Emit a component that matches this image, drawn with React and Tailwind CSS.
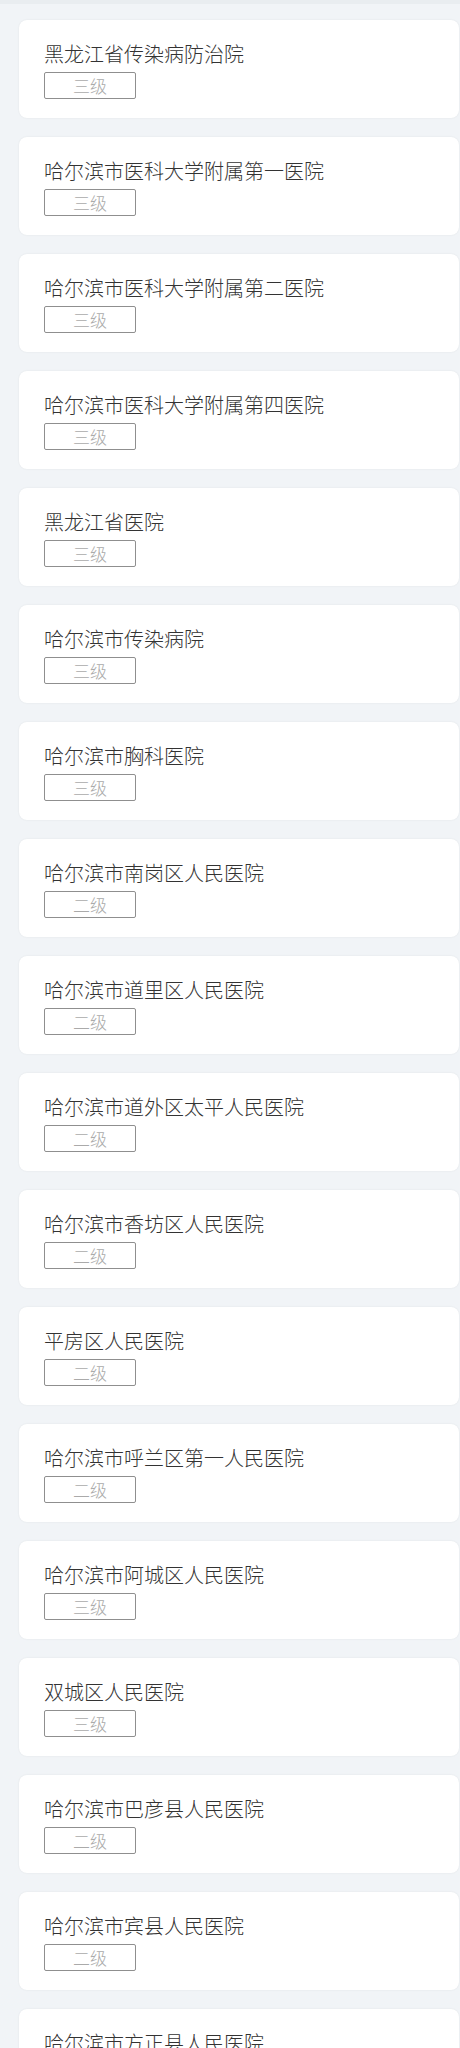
import React from "react";

const hospitals = [
  { name: "黑龙江省传染病防治院", level: "三级" },
  { name: "哈尔滨市医科大学附属第一医院", level: "三级" },
  { name: "哈尔滨市医科大学附属第二医院", level: "三级" },
  { name: "哈尔滨市医科大学附属第四医院", level: "三级" },
  { name: "黑龙江省医院", level: "三级" },
  { name: "哈尔滨市传染病院", level: "三级" },
  { name: "哈尔滨市胸科医院", level: "三级" },
  { name: "哈尔滨市南岗区人民医院", level: "二级" },
  { name: "哈尔滨市道里区人民医院", level: "二级" },
  { name: "哈尔滨市道外区太平人民医院", level: "二级" },
  { name: "哈尔滨市香坊区人民医院", level: "二级" },
  { name: "平房区人民医院", level: "二级" },
  { name: "哈尔滨市呼兰区第一人民医院", level: "二级" },
  { name: "哈尔滨市阿城区人民医院", level: "三级" },
  { name: "双城区人民医院", level: "三级" },
  { name: "哈尔滨市巴彦县人民医院", level: "二级" },
  { name: "哈尔滨市宾县人民医院", level: "二级" },
  { name: "哈尔滨市方正县人民医院", level: "二级" },
];

export default function App() {
  return (
    <div className="min-h-screen bg-[#f1f4f7] font-['Noto_Sans_CJK_SC','Noto_Sans',sans-serif]">
      {/* top strip */}
      <div className="h-[4px] bg-[#e9edf0]" />
      <div className="flex flex-col gap-[19px] pt-[16px] pb-[20px]">
        {hospitals.map((h) => (
          <div
            key={h.name}
            className="ml-[19px] w-[440px] rounded-lg bg-white px-[25px] pt-[20px] pb-[19px] shadow-[0_0_2px_rgba(0,0,0,0.08)]"
          >
            <div className="text-[20px] leading-[28px] font-light text-[#333]">{h.name}</div>
            <div className="mt-[4px] flex h-[27px] w-[92px] items-center justify-center rounded-[2px] border border-[#8f8f8f] text-[17px] font-light text-[#aaa]">
              {h.level}
            </div>
          </div>
        ))}
      </div>
    </div>
  );
}
